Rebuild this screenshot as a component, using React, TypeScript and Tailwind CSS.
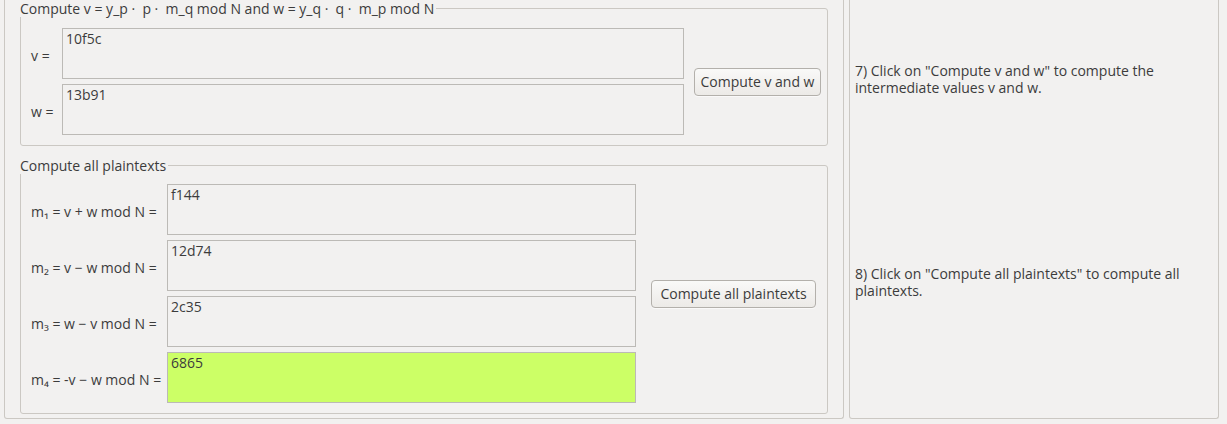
import React from "react";

const font = { fontFamily: '"Open Sans", "Noto Sans", "DejaVu Sans", sans-serif' };

function Field({ value, green }: { value: string; green?: boolean }) {
  return (
    <div
      className={`h-[51px] border border-[#bcbab6] px-[3px] pt-[1px] leading-[17px] ${
        green ? "bg-[#ccff66]" : "bg-[#f2f1f0]"
      }`}
    >
      {value}
    </div>
  );
}

function Btn({ children, w }: { children: React.ReactNode; w: string }) {
  return (
    <button
      className={`${w} h-[28px] rounded-[4px] border border-[#b3b0ab] bg-gradient-to-b from-[#f9f9f8] to-[#eceae7] px-0 leading-[17px] text-[#3c3c3c] whitespace-nowrap shadow-[0_1px_0_rgba(255,255,255,0.6)]`}
    >
      {children}
    </button>
  );
}

function Group({ title, children }: { title: string; children: React.ReactNode }) {
  return (
    <div className="relative pt-[8px]">
      <div className="absolute left-0 top-0 bg-[#f2f1f0] pr-[2px] leading-[17px] whitespace-pre">{title}</div>
      <div className="rounded-[3px] border border-[#cbc8c3]">{children}</div>
    </div>
  );
}

export default function App() {
  const rows2 = [
    { l: "m₁ = v + w mod N =", v: "f144" },
    { l: "m₂ = v − w mod N =", v: "12d74" },
    { l: "m₃ = w − v mod N =", v: "2c35" },
    { l: "m₄ = -v − w mod N =", v: "6865", g: true },
  ];
  return (
    <div
      className="flex h-[424px] w-[1227px] overflow-hidden bg-[#f2f1f0] text-[14px] text-[#3c3c3c]"
      style={font}
    >
      <div className="ml-[4px] h-[419px] w-[840px] rounded-b-[3px] border-x border-b border-[#cbc8c3] px-[15px]">
        <Group title="Compute v = y_p ·  p ·  m_q mod N and w = y_q ·  q ·  m_p mod N">
          <div className="flex h-[136px] items-center pb-[10px] pt-[19px]">
            <div className="flex w-[663px] flex-col gap-[5px]">
              {[
                { l: "v =", v: "10f5c" },
                { l: "w =", v: "13b91" },
              ].map((r) => (
                <div key={r.l} className="flex items-center">
                  <div className="w-[41px] pl-[10px] pt-[3px]">{r.l}</div>
                  <div className="flex-1">
                    <Field value={r.v} />
                  </div>
                </div>
              ))}
            </div>
            <div className="ml-[10px]">
              <Btn w="w-[127px]">Compute v and w</Btn>
            </div>
          </div>
        </Group>
        <div className="mt-[11px]">
          <Group title="Compute all plaintexts">
            <div className="flex h-[247px] items-center pb-[10px] pt-[18px]">
              <div className="flex w-[615px] flex-col gap-[5px]">
                {rows2.map((r) => (
                  <div key={r.l} className="flex items-center">
                    <div className="w-[146px] pl-[10px] pt-[3px] whitespace-nowrap">{r.l}</div>
                    <div className="flex-1">
                      <Field value={r.v} green={r.g} />
                    </div>
                  </div>
                ))}
              </div>
              <div className="ml-[15px]">
                <Btn w="w-[165px]">Compute all plaintexts</Btn>
              </div>
            </div>
          </Group>
        </div>
      </div>
      <div className="ml-[5px] h-[419px] w-[370px] rounded-b-[3px] border-x border-b border-[#cbc8c3] px-[5px] leading-[17px]">
        <div className="pt-[62px]">
          7) Click on "Compute v and w" to compute the
          <br />
          intermediate values v and w.
        </div>
        <div className="pt-[169px]">
          8) Click on "Compute all plaintexts" to compute all
          <br />
          plaintexts.
        </div>
      </div>
    </div>
  );
}
